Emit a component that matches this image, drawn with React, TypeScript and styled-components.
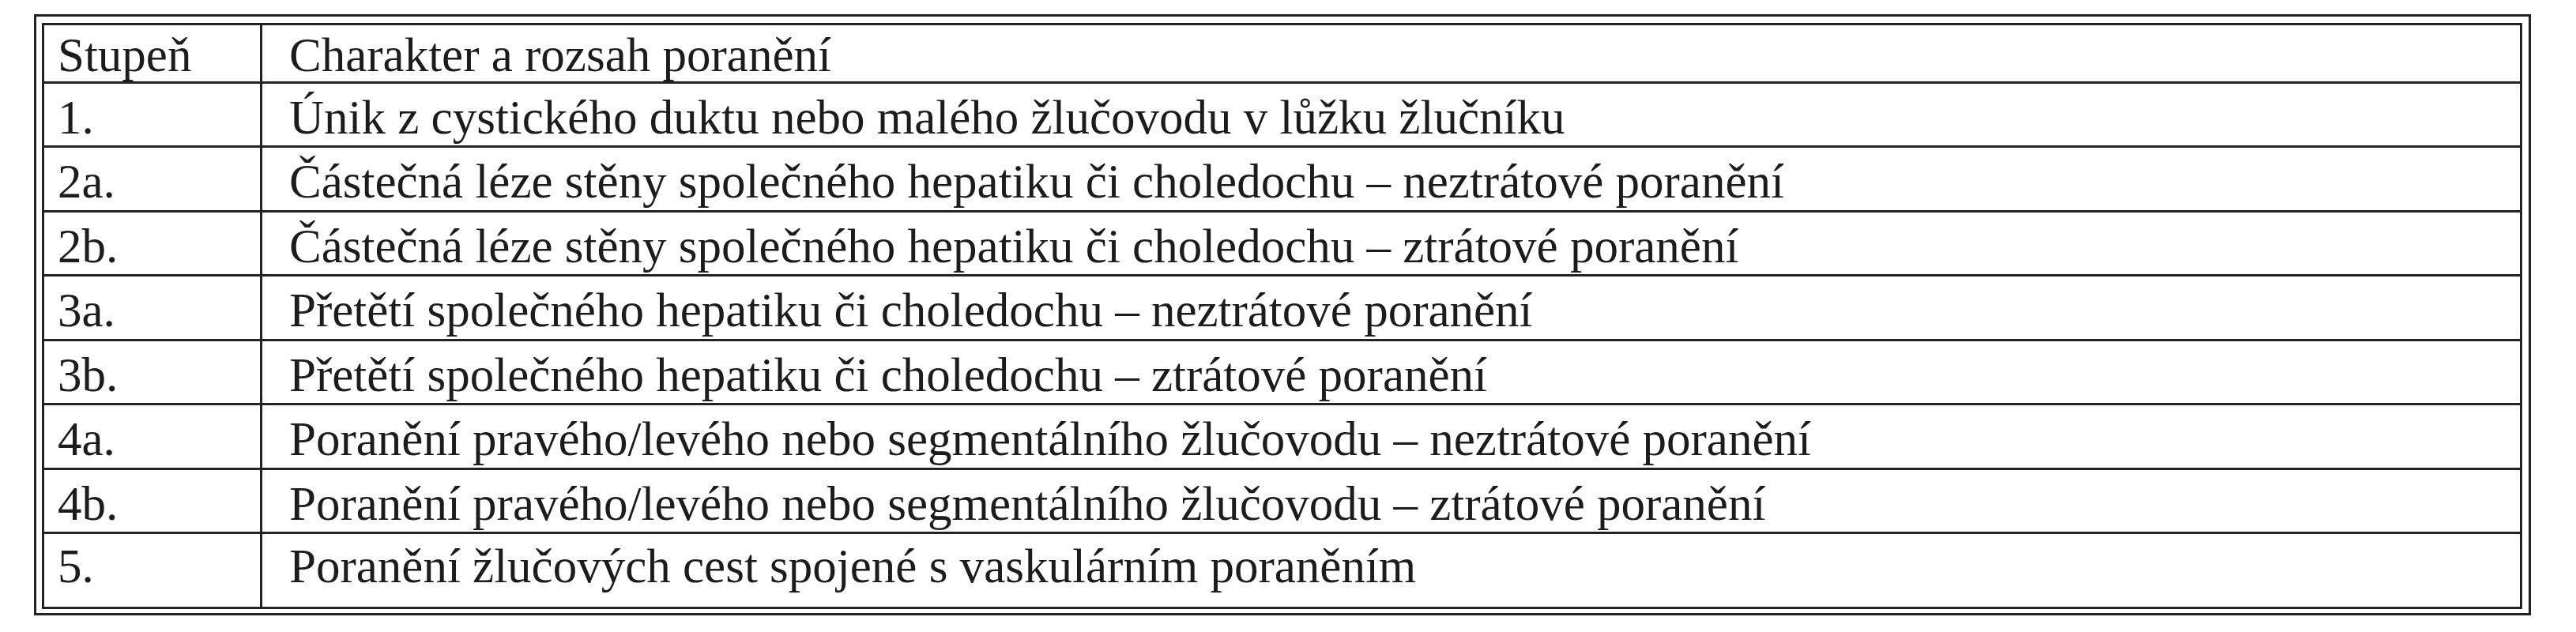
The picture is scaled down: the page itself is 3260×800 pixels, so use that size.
import styled, { createGlobalStyle } from "styled-components";

const GlobalStyle = createGlobalStyle`
  html, body {
    margin: 0;
    padding: 0;
    background: #ffffff;
  }
  body {
    font-family: "Liberation Serif", "Times New Roman", serif;
    color: #1c1c1c;
  }
`;

const Page = styled.div`
  padding: 18px 0 0 43px;
`;

const Frame = styled.div`
  width: 3160px;
  box-sizing: border-box;
  border: 3px solid #222;
  padding: 8px 8px 5px 7px;
`;

const Table = styled.div`
  border: 3px solid #222;
  display: flex;
  flex-direction: column;
`;

const Row = styled.div<{ $h: number; $first?: boolean }>`
  display: grid;
  grid-template-columns: 276px 1fr;
  box-sizing: border-box;
  height: ${({ $h }) => $h}px;
  border-top: ${({ $first }) => ($first ? "none" : "3px solid #222")};
`;

const Cell = styled.div<{ $pt: number; $wide?: boolean }>`
  box-sizing: border-box;
  font-family: "Liberation Serif", "Times New Roman", serif;
  font-size: 61px;
  line-height: 65px;
  white-space: nowrap;
  padding-top: ${({ $pt }) => $pt}px;
  padding-left: ${({ $wide }) => ($wide ? 34 : 17)}px;
  border-right: ${({ $wide }) => ($wide ? "none" : "3px solid #222")};
`;

type Entry = { grade: string; text: string };

const rows: Entry[] = [
  { grade: "1.", text: "Únik z cystického duktu nebo malého žlučovodu v lůžku žlučníku" },
  { grade: "2a.", text: "Částečná léze stěny společného hepatiku či choledochu – neztrátové poranění" },
  { grade: "2b.", text: "Částečná léze stěny společného hepatiku či choledochu – ztrátové poranění" },
  { grade: "3a.", text: "Přetětí společného hepatiku či choledochu – neztrátové poranění" },
  { grade: "3b.", text: "Přetětí společného hepatiku či choledochu – ztrátové poranění" },
  { grade: "4a.", text: "Poranění pravého/levého nebo segmentálního žlučovodu – neztrátové poranění" },
  { grade: "4b.", text: "Poranění pravého/levého nebo segmentálního žlučovodu – ztrátové poranění" },
  { grade: "5.", text: "Poranění žlučových cest spojené s vaskulárním poraněním" },
];

export default function App() {
  return (
    <>
      <GlobalStyle />
      <Page>
        <Frame>
          <Table>
            <Row $h={71} $first>
              <Cell $pt={5}>Stupeň</Cell>
              <Cell $pt={5} $wide>
                Charakter a rozsah poranění
              </Cell>
            </Row>
            {rows.map((r, i) => {
              const last = i === rows.length - 1;
              return (
                <Row key={r.grade} $h={last ? 95 : 81.43}>
                  <Cell $pt={last ? 8 : 10}>{r.grade}</Cell>
                  <Cell $pt={last ? 8 : 10} $wide>
                    {r.text}
                  </Cell>
                </Row>
              );
            })}
          </Table>
        </Frame>
      </Page>
    </>
  );
}
